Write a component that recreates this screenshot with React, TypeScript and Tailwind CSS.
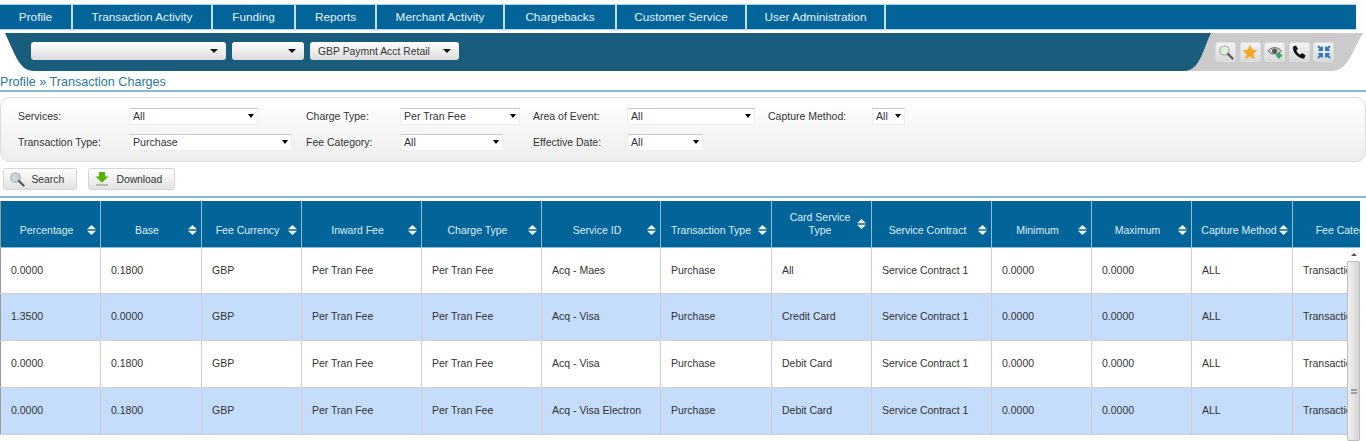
const navItems = [
  { label: "Profile", width: "w-[73px]" },
  { label: "Transaction Activity", width: "w-[140px]" },
  { label: "Funding", width: "w-[83px]" },
  { label: "Reports", width: "w-[81px]" },
  { label: "Merchant Activity", width: "w-[128px]" },
  { label: "Chargebacks", width: "w-[112px]" },
  { label: "Customer Service", width: "w-[130px]" },
  { label: "User Administration", width: "w-[139px]" },
]

const columns = [
  { label: "Percentage", width: "w-[100px]", pad: "pl-[4px] pr-[12px]" },
  { label: "Base", width: "w-[101px]", pad: "pl-[4px] pr-[12px]" },
  { label: "Fee Currency", width: "w-[100px]", pad: "pl-[4px] pr-[12px]" },
  { label: "Inward Fee", width: "w-[120px]", pad: "pl-[4px] pr-[12px]" },
  { label: "Charge Type", width: "w-[120px]", pad: "pl-[4px] pr-[12px]" },
  { label: "Service ID", width: "w-[119px]", pad: "pl-[4px] pr-[12px]" },
  { label: "Transaction Type", width: "w-[111px]", pad: "pl-[4px] pr-[14px]" },
  { label: "Card Service Type", width: "w-[100px]", pad: "pl-[11px] pr-[14px]" },
  { label: "Service Contract", width: "w-[120px]", pad: "pl-[4px] pr-[12px]" },
  { label: "Minimum", width: "w-[100px]", pad: "pl-[4px] pr-[12px]" },
  { label: "Maximum", width: "w-[100px]", pad: "pl-[4px] pr-[12px]" },
  { label: "Capture Method", width: "w-[101px]", pad: "pl-[4px] pr-[10px]" },
  { label: "Fee Category", width: "w-[115px]", pad: "pl-[4px] pr-[9px]" },
]

const rows = [
  ["0.0000", "0.1800", "GBP", "Per Tran Fee", "Per Tran Fee", "Acq - Maes", "Purchase", "All", "Service Contract 1", "0.0000", "0.0000", "ALL", "Transaction"],
  ["1.3500", "0.0000", "GBP", "Per Tran Fee", "Per Tran Fee", "Acq - Visa", "Purchase", "Credit Card", "Service Contract 1", "0.0000", "0.0000", "ALL", "Transaction"],
  ["0.0000", "0.1800", "GBP", "Per Tran Fee", "Per Tran Fee", "Acq - Visa", "Purchase", "Debit Card", "Service Contract 1", "0.0000", "0.0000", "ALL", "Transaction"],
  ["0.0000", "0.1800", "GBP", "Per Tran Fee", "Per Tran Fee", "Acq - Visa Electron", "Purchase", "Debit Card", "Service Contract 1", "0.0000", "0.0000", "ALL", "Transaction"],
]

const Caret = () => <span className="h-0 w-0 border-x-[3px] border-t-[4px] border-x-transparent border-t-black" />

const SortIcon = ({ raised }: { raised: boolean }) => (
  <svg
    width="9"
    height="10"
    viewBox="0 0 9 10"
    className={`absolute ${raised ? "right-[5px] top-[18px]" : "right-[4px] bottom-[12px]"}`}
    fill="#f2f7fa"
  >
    <path d="M4.5 0 L9 4.3 H0 Z" />
    <path d="M4.5 10 L9 5.7 H0 Z" />
  </svg>
)

const FilterSelect = ({ value, width }: { value: string; width: string }) => (
  <div className={`-ml-px flex h-[17px] ${width} items-center justify-between border border-[#eeeeee] border-t-[#c9c9c9] bg-white pl-[3px] pr-[3px] text-[10.6px] text-[#333]`}>
    <span className="pt-px">{value}</span>
    <Caret />
  </div>
)

const BarSelect = ({ value, width }: { value?: string; width: string }) => (
  <div className={`flex h-[18px] ${width} items-center justify-between rounded-[3px] bg-gradient-to-b from-white to-[#dcdcdc] pl-2 pr-[8px] text-[10.4px] text-[#333]`}>
    <span className="pt-px">{value}</span>
    <span className="h-0 w-0 border-x-[4px] border-t-[4px] border-x-transparent border-t-[#111]" />
  </div>
)

const ToolButton = ({ children }: { children: React.ReactNode }) => (
  <div className="flex h-[20px] w-[21px] items-center justify-center rounded-[3px] border border-[#dedede] bg-gradient-to-b from-[#f4f4f4] to-[#dadada]">
    {children}
  </div>
)

const Label = ({ text }: { text: string }) => <div className="-ml-px pt-px text-[10.5px] text-[#333]">{text}</div>

const MagnifierIcon = ({ size = 16, tint = "#c9d6dc" }: { size?: number; tint?: string }) => (
  <svg width={size} height={size} viewBox="0 0 16 16">
    <circle cx="6.5" cy="6.5" r="4.6" fill={tint} stroke="#a8b4ba" strokeWidth="1.4" />
    <path d="M10 10 L14.5 14.5" stroke="#555" strokeWidth="2.2" strokeLinecap="round" />
  </svg>
)

export default function App() {
  return (
    <div className="h-[441px] w-[1366px] overflow-hidden bg-white font-[Liberation_Sans,Arial,sans-serif]">
      {/* Main nav */}
      <div className="pt-[4px]">
        <div className="flex h-[26px] w-[1356px] border-y border-[#a9d4ea] bg-[#03649a]">
          {navItems.map((item) => (
            <div
              key={item.label}
              className={`flex ${item.width} items-center justify-center border-r-2 border-[#bfe0f0] text-[11.75px] text-[#e8f2f7]`}
            >
              {item.label}
            </div>
          ))}
        </div>
      </div>

      {/* Account bar */}
      <div className="relative mt-[3px] flex h-[38px] items-start pl-[31px] pt-[9px]">
        <svg width="1366" height="38" viewBox="0 0 1366 38" className="absolute left-0 top-0">
          <path d="M1170 0 H1363 C1352 18 1348 38 1332 38 H1170 Z" fill="#cbcbcb" />
          <path d="M5 0 H1211 C1203 16 1200 38 1184 38 H34 C20 38 16 24 5 0 Z" fill="#195c7c" />
        </svg>
        <div className="relative flex gap-[6px]">
          <BarSelect width="w-[195px]" />
          <BarSelect width="w-[72px]" />
          <BarSelect value="GBP Paymnt Acct Retail" width="w-[149px]" />
        </div>
        <div className="relative ml-[756px] flex gap-[3.5px]">
          <ToolButton>
            <MagnifierIcon tint="#dff0d8" />
          </ToolButton>
          <ToolButton>
            <svg width="16" height="16" viewBox="0 0 16 16">
              <path d="M8 1 L10.2 5.7 L15.2 6.3 L11.5 9.8 L12.5 15 L8 12.4 L3.5 15 L4.5 9.8 L0.8 6.3 L5.8 5.7 Z" fill="#f5a623" stroke="#e8c468" strokeWidth="0.6" />
            </svg>
          </ToolButton>
          <ToolButton>
            <svg width="16" height="16" viewBox="0 0 16 16">
              <path d="M1 7 C4 2.5 11 2.5 14.5 7 C11 11 4 11 1 7 Z" fill="#cfcfcf" stroke="#666" strokeWidth="1" />
              <circle cx="7.5" cy="7" r="2.5" fill="#555" />
              <path d="M12 8.5 V14.5 M9 11.5 H15" stroke="#34a853" strokeWidth="2.4" />
            </svg>
          </ToolButton>
          <ToolButton>
            <svg width="16" height="16" viewBox="0 0 16 16">
              <path d="M2 2.5 L5 1.5 L7 5 L5.3 6.6 C6 8.4 7.4 9.9 9.2 10.7 L11 9 L14.5 11.2 L13.4 14.2 C12.5 15 10 14.6 7.4 12.8 C4.2 10.6 1.2 6 2 2.5 Z" fill="#111" />
            </svg>
          </ToolButton>
          <ToolButton>
            <svg width="16" height="16" viewBox="0 0 16 16" fill="none" stroke="#2b78c5" strokeWidth="1.8">
              <path d="M2 2 L6 6 M6 2.5 V6 H2.5" />
              <path d="M14 2 L10 6 M10 2.5 V6 H13.5" />
              <path d="M2 14 L6 10 M6 13.5 V10 H2.5" />
              <path d="M14 14 L10 10 M10 13.5 V10 H13.5" />
            </svg>
          </ToolButton>
        </div>
      </div>

      {/* Breadcrumb */}
      <div className="mt-[2px] h-[19px] border-b-2 border-[#84b8d4] pt-px text-[12.6px] leading-[17px] text-[#2a7aa3]">
        Profile » Transaction Charges
      </div>

      {/* Filters */}
      <div className="mt-[5px] grid h-[65px] w-[1366px] grid-cols-[111px_177px_94px_133px_94px_141px_104px_1fr] grid-rows-[26px_26px] items-center rounded-[10px] border border-[#dcdcdc] bg-gradient-to-b from-white to-[#eeeeee] pl-[18px] pt-[5px]">
        <Label text="Services:" />
        <FilterSelect value="All" width="w-[129px]" />
        <Label text="Charge Type:" />
        <FilterSelect value="Per Tran Fee" width="w-[120px]" />
        <Label text="Area of Event:" />
        <FilterSelect value="All" width="w-[128px]" />
        <Label text="Capture Method:" />
        <FilterSelect value="All" width="w-[33px]" />
        <Label text="Transaction Type:" />
        <FilterSelect value="Purchase" width="w-[163px]" />
        <Label text="Fee Category:" />
        <FilterSelect value="All" width="w-[103px]" />
        <Label text="Effective Date:" />
        <FilterSelect value="All" width="w-[76px]" />
      </div>

      {/* Actions */}
      <div className="ml-[3px] mt-[6px] flex gap-[11px]">
        <button className="flex h-[22px] w-[74px] items-center gap-[6.5px] rounded-[3px] border border-[#d5d5d5] bg-gradient-to-b from-white to-[#e2e2e2] pl-[5px] text-[10.3px] text-[#333]">
          <MagnifierIcon />
          <span className="pt-px">Search</span>
        </button>
        <button className="flex h-[22px] w-[87px] items-center gap-[6.5px] rounded-[3px] border border-[#d5d5d5] bg-gradient-to-b from-white to-[#e2e2e2] pl-[5px] text-[10.3px] text-[#333]">
          <svg width="16" height="16" viewBox="0 0 16 16">
            <path d="M5 1 H11 V5.5 H14.5 L8 11.5 L1.5 5.5 H5 Z" fill="#56b000" />
            <path d="M2 13 H14 V15 H2 Z" fill="#b9b9a8" />
          </svg>
          <span className="pt-px">Download</span>
        </button>
      </div>

      <div className="mt-[6px] h-[2px] bg-[#84b8d4]" />

      {/* Table */}
      <div className="relative mt-[3px] h-[240px] w-[1360px] overflow-hidden">
        <table className="w-[1407px] table-fixed border-collapse border-l border-[#999] text-[10.5px]">
          <thead>
            <tr className="h-[46px] bg-[#03649a] text-[#dfeef6]">
              {columns.map((col) => (
                <th key={col.label} className={`relative ${col.width} border-r border-b border-[#8fbdd6] pb-[10px] ${col.pad} text-center align-bottom font-normal leading-[13px]`}>
                  {col.label}
                  <SortIcon raised={col.label === "Card Service Type"} />
                </th>
              ))}
            </tr>
          </thead>
          <tbody>
            {rows.map((row, i) => (
              <tr key={i} className={`h-[46.75px] ${i % 2 === 1 ? "bg-[#c5dcfb]" : "bg-white"}`}>
                {row.map((cell, j) => (
                  <td key={j} className="overflow-hidden whitespace-nowrap border-r border-b border-[#d0d0d0] pl-[10px] text-[#333]">
                    {cell}
                  </td>
                ))}
              </tr>
            ))}
          </tbody>
        </table>

        {/* Scrollbar */}
        <div className="absolute bottom-0 right-0 top-[47px] flex w-[13px] flex-col items-center bg-[#eeeeee]">
          <div className="flex h-[13px] w-full items-center justify-center bg-white">
            <span className="h-0 w-0 border-x-[3px] border-b-[3px] border-x-transparent border-b-[#555]" />
          </div>
          <div className="flex w-full flex-1 items-start justify-center rounded-[2px] border border-[#bdbdbd] bg-gradient-to-r from-[#f1f1f1] to-[#d4d4d4] pt-[127px]">
            <span className="h-[5px] w-[6px] border-y-[2px] border-[#a0a0a0] bg-[#e4e4e4]" />
          </div>
        </div>
      </div>
    </div>
  )
}
